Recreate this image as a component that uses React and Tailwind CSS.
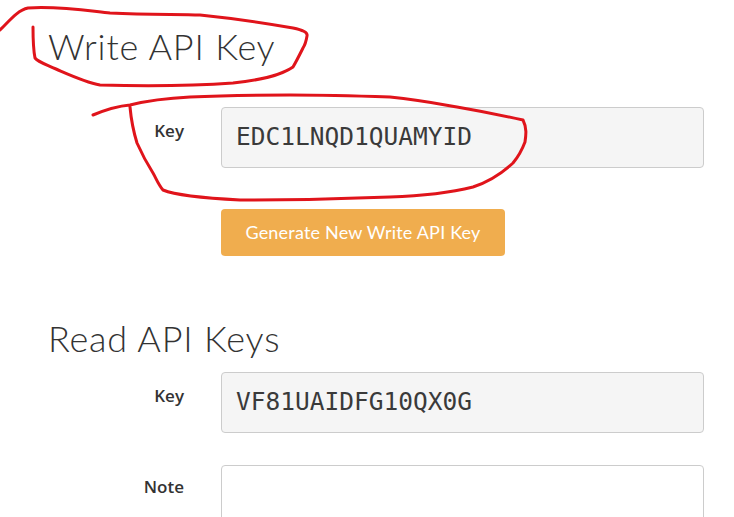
export default function App() {
  return (
    <div className="relative w-[734px] h-[517px] overflow-hidden bg-white text-[#333]">
      <div className="pt-[27px]">
        <h2 className="pl-[48px] text-[36px] leading-[1.1] font-light tracking-[0.8px]" style={{ fontFamily: 'Lato, sans-serif' }}>
          Write API Key
        </h2>

        <div className="flex mt-[40px]">
          <div className="w-[184px] text-right pt-[12px] text-[17px] leading-[24px] font-semibold" style={{ fontFamily: '"Open Sans", sans-serif' }}>
            Key
          </div>
          <div className="ml-[37px] w-[483px]">
            <div className="h-[61px] flex items-center px-[14px] bg-[#f5f5f5] border border-[#cccccc] rounded-[4px] text-[24.5px] text-[#3a3a3a]" style={{ fontFamily: '"DejaVu Sans Mono", monospace' }}>
              EDC1LNQD1QUAMYID
            </div>
            <button type="button" className="mt-[41px] h-[47px] w-[284px] bg-[#f0ad4e] rounded-[4px] text-white text-[18px] tracking-[0.2px]" style={{ fontFamily: 'Lato, sans-serif' }}>
              Generate New Write API Key
            </button>
          </div>
        </div>

        <h2 className="pl-[48px] mt-[63px] text-[36px] leading-[1.1] font-light tracking-[0.8px]" style={{ fontFamily: 'Lato, sans-serif' }}>
          Read API Keys
        </h2>

        <div className="flex mt-[14px]">
          <div className="w-[184px] text-right pt-[12px] text-[17px] leading-[24px] font-semibold" style={{ fontFamily: '"Open Sans", sans-serif' }}>
            Key
          </div>
          <div className="ml-[37px] w-[483px] h-[61px] flex items-center px-[14px] bg-[#f5f5f5] border border-[#cccccc] rounded-[4px] text-[24.5px] text-[#3a3a3a]" style={{ fontFamily: '"DejaVu Sans Mono", monospace' }}>
            VF81UAIDFG10QX0G
          </div>
        </div>

        <div className="flex mt-[32px]">
          <div className="w-[184px] text-right pt-[10px] text-[17px] leading-[24px] font-semibold" style={{ fontFamily: '"Open Sans", sans-serif' }}>
            Note
          </div>
          <div className="ml-[37px] w-[483px] h-[80px] bg-white border border-[#cccccc] rounded-[4px]" />
        </div>
      </div>

      {/* red hand-drawn annotations */}
      <svg className="absolute inset-0 pointer-events-none" width="734" height="517" viewBox="0 0 734 517" fill="none">
        <path
          d="M0 30 C10 20 18 10 28 8 C60 6 90 11 110 13 C150 15 180 14 200 15 C240 19 270 24 293 28 C302 30 308 32 307 36 C306 42 305 45 303 48 C299 56 296 62 293 67 C280 76 260 80 233 83 C190 86 140 86 100 85 C85 82 70 75 56 69 C45 64 38 62 35 58 C33 48 33 37 33 27"
          stroke="#e0141b"
          strokeWidth="3"
          strokeLinecap="round"
          strokeLinejoin="round"
        />
        <path
          d="M93 115 C105 110 118 106 130 105 C150 100 170 98 190 97 C230 95 260 95 290 95 C330 95 360 96 390 97 C420 100 440 104 457 107 C480 111 505 116 523 120 C527 128 526 135 525 142 C522 150 518 157 513 163 C500 175 488 182 473 187 C445 194 420 196 390 197 C340 199 290 200 240 200 C200 198 175 195 163 190 C158 184 156 178 153 173 C146 162 141 152 137 143 C133 130 131 118 130 107"
          stroke="#e0141b"
          strokeWidth="3"
          strokeLinecap="round"
          strokeLinejoin="round"
        />
      </svg>
    </div>
  )
}
